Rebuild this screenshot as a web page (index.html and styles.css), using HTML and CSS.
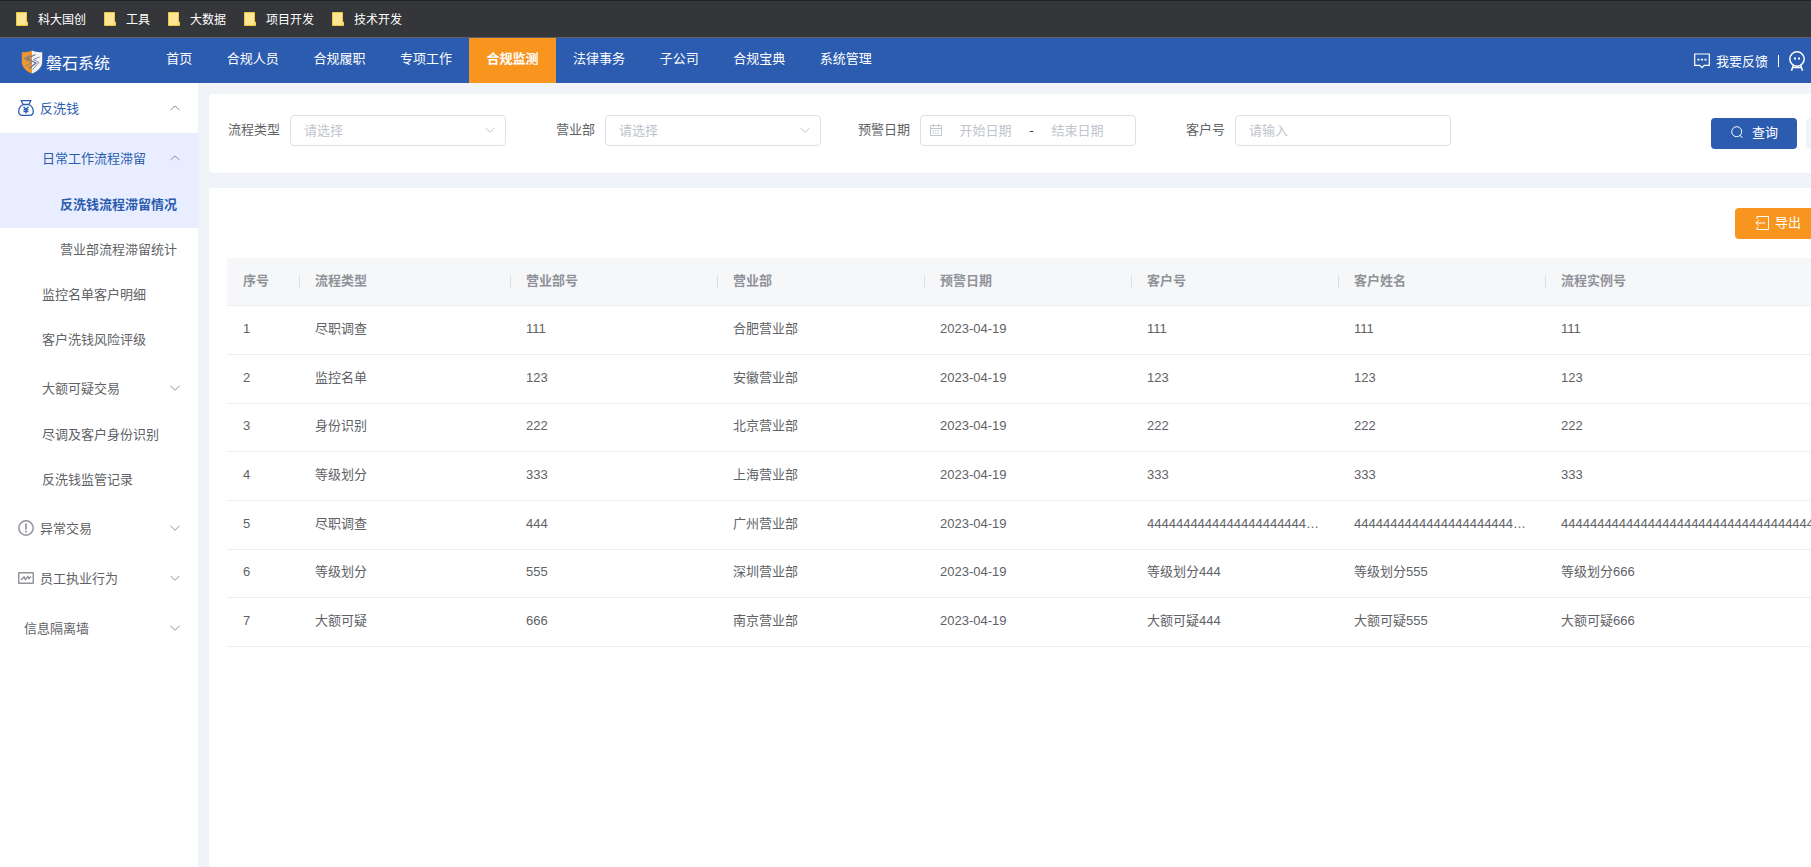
FILE: index.html
```html
<!DOCTYPE html>
<html lang="zh-CN">
<head>
<meta charset="utf-8">
<title>磐石系统</title>
<link rel="stylesheet" href="styles.css">
</head>
<body>
<svg width="0" height="0" class="defs" aria-hidden="true">
  <symbol id="down" viewBox="0 0 12 12"><path d="M1.500 3.800 6 8.300l4.500-4.500" fill="none" stroke="currentColor"/></symbol>
  <symbol id="up" viewBox="0 0 12 12"><path d="M1.500 8 6 4l4.500 4" fill="none" stroke="currentColor"/></symbol>
  <symbol id="folder" viewBox="0 0 12 14"><path d="M.5.5h10v9l1 .5v3.500H.5z" fill="#ffe694" stroke="#f0c93e"/><path d="M9.500 13v-3h2v3z" fill="#f7d774"/></symbol>
</svg>
<div class="shell">
  <nav class="bookmarks" aria-label="书签">
    <a href="#"><svg><use href="#folder"/></svg>科大国创</a>
    <a href="#"><svg><use href="#folder"/></svg>工具</a>
    <a href="#"><svg><use href="#folder"/></svg>大数据</a>
    <a href="#"><svg><use href="#folder"/></svg>项目开发</a>
    <a href="#"><svg><use href="#folder"/></svg>技术开发</a>
  </nav>
  <header class="topbar">
    <a class="brand" href="#">
      <svg viewBox="0 0 22 24"><path d="M11 .5C8 2 4 2.500.8 2v10c0 5.500 5 9.500 10.200 11.500z" fill="#f0962e"/><path d="M11 .5C14 2 18 2.500 21.200 2v10c0 5.500-5 9.500-10.200 11.500z" fill="#f4f4f4"/><path d="M14.500 4.500 6 8.500l9 4.500-7 5.500" fill="none" stroke="#5f6f94" stroke-width="1.200"/><path d="M10 4.500 3 8.500l7.500 4.500-6 3M18.500 7l-6 2.500 5.500 3-6.500 7" fill="none" stroke="#76809a" stroke-width=".9"/></svg>
      磐石系统
    </a>
    <nav class="menu" aria-label="主导航">
      <a href="#">首页</a>
      <a href="#">合规人员</a>
      <a href="#">合规履职</a>
      <a href="#">专项工作</a>
      <a href="#" class="active" aria-current="page">合规监测</a>
      <a href="#">法律事务</a>
      <a href="#">子公司</a>
      <a href="#">合规宝典</a>
      <a href="#">系统管理</a>
    </nav>
    <div class="tools">
      <a href="#"><svg class="icon-feedback" viewBox="0 0 16 16" fill="none" stroke="currentColor" stroke-width="1.200"><path d="M.7 1h14.600v11.300h-5L8 14.700l-2.300-2.400h-5z"/><path d="M3.500 6.700h2M7 6.700h2M10.500 6.700h2" stroke-width="1.800"/></svg>我要反馈</a>
      <span class="bar"></span>
      <a href="#" aria-label="用户"><svg class="icon-user" viewBox="0 0 16 20" fill="none" stroke="currentColor" stroke-width="1.500"><circle cx="8" cy="8" r="7.200"/><path d="M5 7.500h2M9 7.500h2" stroke-width="2"/><path d="M4.300 14.300 2.500 19.700M11.700 14.300l1.800 5.400M3.500 16.500h9"/></svg></a>
    </div>
  </header>
  <div class="body">
    <aside class="sidebar">
      <a href="#" class="item group open"><svg class="lead" viewBox="0 0 16 16" fill="none" stroke="currentColor" stroke-width="1.300"><path d="M3.300.7h9.400L11 4.500c2.500 1.500 4.300 4.300 4.300 7 0 2.500-1.300 3.800-3.500 3.800H4.200C2 15.300.7 14 .7 11.500c0-2.700 1.800-5.500 4.300-7zM5 4.500h6"/><path d="M5.500 6.800 8 9.300l2.500-2.500M5.500 9.700h5M5.500 11.500h5M8 9v4.500"/></svg><span>反洗钱</span><svg class="arrow"><use href="#up"/></svg></a>
      <a href="#" class="item group open sub tint"><span>日常工作流程滞留</span><svg class="arrow"><use href="#up"/></svg></a>
      <a href="#" class="item leaf tint current" aria-current="page"><span>反洗钱流程滞留情况</span></a>
      <a href="#" class="item leaf"><span>营业部流程滞留统计</span></a>
      <a href="#" class="item sub"><span>监控名单客户明细</span></a>
      <a href="#" class="item sub"><span>客户洗钱风险评级</span></a>
      <a href="#" class="item group sub"><span>大额可疑交易</span><svg class="arrow"><use href="#down"/></svg></a>
      <a href="#" class="item sub"><span>尽调及客户身份识别</span></a>
      <a href="#" class="item sub"><span>反洗钱监管记录</span></a>
      <a href="#" class="item group"><svg class="lead" viewBox="0 0 16 16" fill="none" stroke="currentColor" stroke-width="1.500"><circle cx="8" cy="8" r="7.200"/><path d="M8 3.500v6M8 10.800v1.700" stroke-width="1.700"/></svg><span>异常交易</span><svg class="arrow"><use href="#down"/></svg></a>
      <a href="#" class="item group"><svg class="lead" viewBox="0 0 16 16" fill="none" stroke="currentColor" stroke-width="1.500"><rect x=".7" y="2.700" width="14.600" height="10.600" rx=".5"/><path d="m3 10 3-3 1.500 2.500L10 6.500 11 8.500l2-2"/></svg><span>员工执业行为</span><svg class="arrow"><use href="#down"/></svg></a>
      <a href="#" class="item group plain"><span>信息隔离墙</span><svg class="arrow"><use href="#down"/></svg></a>
    </aside>
    <main class="content">
      <form class="card filters">
        <div class="field">
          <label for="type">流程类型</label>
          <div class="box"><select id="type"><option>请选择</option></select><svg class="caret"><use href="#down"/></svg></div>
        </div>
        <div class="field">
          <label for="dept">营业部</label>
          <div class="box"><select id="dept"><option>请选择</option></select><svg class="caret"><use href="#down"/></svg></div>
        </div>
        <div class="field">
          <label for="from">预警日期</label>
          <div class="box range">
            <svg class="calendar" viewBox="0 0 12 12" fill="none" stroke="currentColor"><path d="M.5 1.500h11v10H.5zM.5 4.500h11M3.500 0v3M8.500 0v3"/><path d="M2.500 6.500h7M2.500 9h7" stroke-dasharray="1.500 1"/></svg>
            <input id="from" type="text" placeholder="开始日期">
            <span>-</span>
            <input type="text" placeholder="结束日期" aria-label="结束日期">
          </div>
        </div>
        <div class="field">
          <label for="customer">客户号</label>
          <div class="box"><input id="customer" type="text" placeholder="请输入"></div>
        </div>
        <div class="actions">
          <button type="button" class="btn primary"><svg viewBox="0 0 12 12" fill="none" stroke="currentColor"><circle cx="5.700" cy="5.700" r="5"/><path d="m9 9.500 2.500 2"/></svg>查询</button>
          <button type="button" class="reset" aria-label="重置"></button>
        </div>
      </form>
      <section class="card results">
        <div class="toolbar">
          <button type="button" class="btn export"><svg viewBox="0 0 14 16" fill="none" stroke="currentColor"><path d="M2 5V2.500h11.500v13H2V13M10 9H1M4 5.800.800 9 4 12.200"/></svg>导出</button>
        </div>
        <table>
          <colgroup><col class="c-index"><col class="c-type"><col class="c"><col class="c"><col class="c"><col class="c"><col class="c"><col></colgroup>
          <thead><tr><th>序号</th><th>流程类型</th><th>营业部号</th><th>营业部</th><th>预警日期</th><th>客户号</th><th>客户姓名</th><th>流程实例号</th></tr></thead>
          <tbody>
            <tr><td>1</td><td>尽职调查</td><td>111</td><td>合肥营业部</td><td>2023-04-19</td><td>111</td><td>111</td><td>111</td></tr>
            <tr><td>2</td><td>监控名单</td><td>123</td><td>安徽营业部</td><td>2023-04-19</td><td>123</td><td>123</td><td>123</td></tr>
            <tr><td>3</td><td>身份识别</td><td>222</td><td>北京营业部</td><td>2023-04-19</td><td>222</td><td>222</td><td>222</td></tr>
            <tr><td>4</td><td>等级划分</td><td>333</td><td>上海营业部</td><td>2023-04-19</td><td>333</td><td>333</td><td>333</td></tr>
            <tr><td>5</td><td>尽职调查</td><td>444</td><td>广州营业部</td><td>2023-04-19</td><td>4444444444444444444444444444</td><td>4444444444444444444444444444</td><td>444444444444444444444444444444444444</td></tr>
            <tr><td>6</td><td>等级划分</td><td>555</td><td>深圳营业部</td><td>2023-04-19</td><td>等级划分444</td><td>等级划分555</td><td>等级划分666</td></tr>
            <tr><td>7</td><td>大额可疑</td><td>666</td><td>南京营业部</td><td>2023-04-19</td><td>大额可疑444</td><td>大额可疑555</td><td>大额可疑666</td></tr>
          </tbody>
        </table>
      </section>
    </main>
  </div>
</div>
</body>
</html>
```
FILE: styles.css
```css
* { box-sizing: border-box; }
body {
  margin: 0;
  background: #f0f4f8;
  color: #606266;
  font: 13px/20px "Noto Sans CJK SC", sans-serif;
  overflow-x: hidden;
}
.defs { position: absolute; }
a { color: inherit; text-decoration: none; }
input, select, button { font: inherit; color: inherit; }
svg { flex: none; display: block; }
.shell { display: flex; flex-direction: column; min-height: 100vh; }

.bookmarks {
  display: flex;
  align-items: center;
  gap: 18px;
  height: 38px;
  padding: 0 16px;
  background: #35363a;
  border-top: 1px solid #202124;
  border-bottom: 1px solid #5f6063;
  color: #fff;
  font-size: 12px;
}
.bookmarks a { display: flex; align-items: center; gap: 10px; }
.bookmarks svg { width: 12px; height: 14px; }

.topbar { display: flex; height: 45px; background: #2b5caf; color: #fff; }
.brand { display: flex; align-items: center; gap: 3px; width: 149px; padding: 2px 0 0 21px; font-size: 16px; }
.brand svg { width: 22px; height: 24px; }
.menu { display: flex; flex: 0 1 740px; }
.menu a { flex: 1 1 auto; padding: 10px 17px 0; text-align: center; white-space: nowrap; }
.menu .active { background: #f8951f; font-weight: 700; }
.tools { display: flex; align-items: center; gap: 10px; margin-left: auto; padding-right: 6px; }
.tools a { display: flex; align-items: center; gap: 6px; }
.bar { width: 1px; height: 12px; background: #fff; }
.icon-feedback { width: 16px; height: 16px; }
.icon-user { width: 16px; height: 20px; }

.body { display: flex; flex: 1; }
.sidebar { flex: 0 0 198px; background: #fff; }
.item { display: flex; align-items: center; height: 45px; padding: 0 17px 3px 18px; white-space: nowrap; }
.item.group { height: 50px; padding-bottom: 0; }
.item.sub { padding-left: 42px; }
.item.leaf { padding-left: 60px; }
.item.plain { padding-left: 24px; }
.open, .current { color: #2b5caf; }
.tint { background: #e8eeff; }
.current { font-weight: 700; }
.lead { width: 16px; height: 16px; margin-right: 6px; color: #909399; }
.open .lead { color: #2b5caf; }
.arrow { width: 12px; height: 12px; margin-left: auto; color: #909399; }

.content { flex: 1; min-width: 0; display: flex; flex-direction: column; gap: 15px; padding: 11px 0 0 11px; }
.card { background: #fff; border-radius: 4px 0 0 4px; }
.filters { display: flex; gap: 37px; height: 79px; padding: 21px 0 0 19px; }
.field { display: flex; gap: 10px; }
.field label { width: 52px; padding-top: 4px; text-align: right; white-space: nowrap; }
.box { display: flex; align-items: center; width: 216px; height: 31px; padding: 0 9px 2px 13px; border: 1px solid #dcdfe6; border-radius: 4px; color: #c0c4cc; }
.box select, .box input { flex: 1; min-width: 0; padding: 0; border: 0; outline: 0; background: none; appearance: none; }
.box ::placeholder { color: #c0c4cc; }
.caret { width: 12px; height: 12px; }
.range { padding: 0 14px 2px 9px; }
.range input { text-align: center; }
.range span { color: #303133; }
.calendar { width: 12px; height: 12px; }
.actions { display: flex; gap: 9px; width: 100px; margin-left: auto; padding-top: 3px; }
.btn { display: flex; align-items: center; height: 31px; padding: 0 20px 3px; border: 0; border-radius: 4px; color: #fff; white-space: nowrap; }
.primary { gap: 9px; width: 86px; flex: none; background: #2b5caf; }
.primary svg { width: 12px; height: 12px; }
.reset { flex: 1; min-width: 0; height: 31px; padding: 0; border: 0; border-radius: 4px 0 0 4px; background: #f0f4f8; }

.results { flex: 1; padding: 20px 0 0 18px; }
.toolbar { display: flex; justify-content: flex-end; margin-bottom: 19px; }
.export { gap: 6px; width: 76px; background: #f8951f; border-radius: 4px 0 0 4px; }
.export svg { width: 14px; height: 16px; }
table { width: 100%; table-layout: fixed; border-collapse: separate; border-spacing: 0; }
.c-index { width: 73px; }
.c-type { width: 211px; }
.c { width: 207px; }
th, td { height: 49px; padding: 0 16px 3px 15px; border-bottom: 1px solid #ebeef5; text-align: left; white-space: nowrap; overflow: hidden; text-overflow: ellipsis; }
th:first-child, td:first-child { padding-left: 16px; }
td { font-family: "Liberation Sans", "Noto Sans CJK SC", sans-serif; }
th { height: 48px; background: #f6f7f9; color: #909399; }
th:not(:last-child) { background: linear-gradient(#dcdfe6, #dcdfe6) right 17px / 1px 13px no-repeat #f6f7f9; }
tbody tr:nth-child(3n) td { height: 48px; }
td:last-child { padding-right: 0; text-overflow: clip; }
```
